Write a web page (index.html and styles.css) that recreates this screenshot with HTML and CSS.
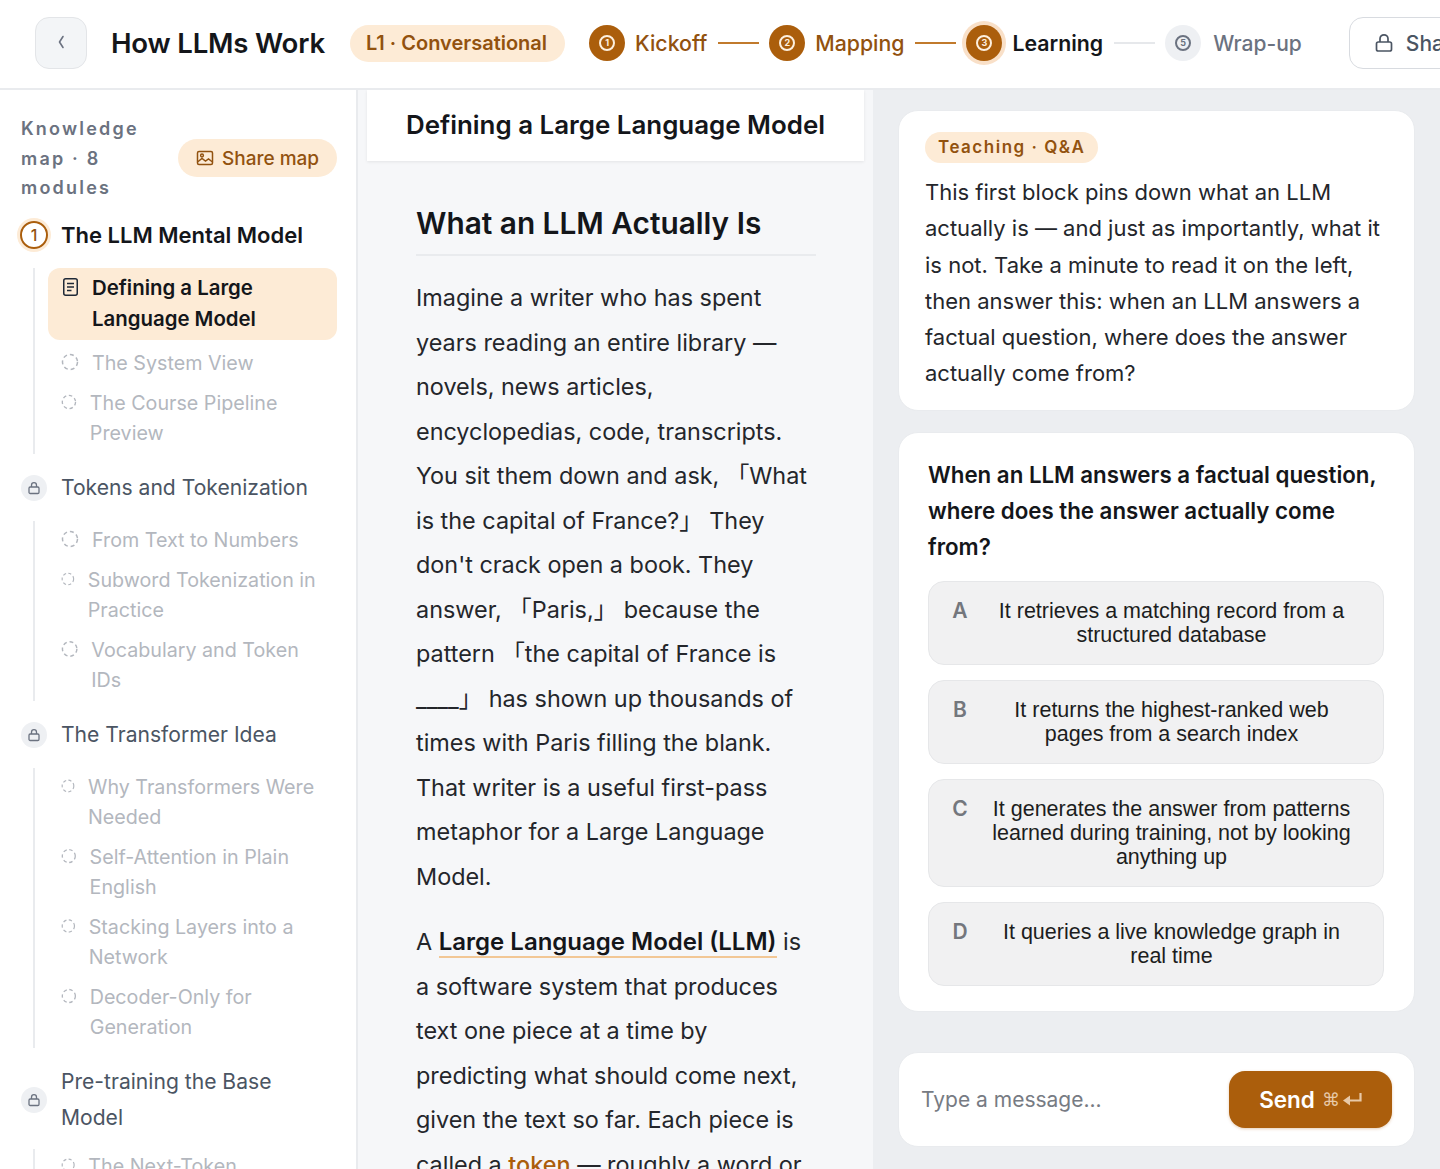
FILE: index.html
```html
<!DOCTYPE html>
<html lang="en">
<head>
  <meta charset="UTF-8">
  <title>How LLMs Work</title>
  <link rel="stylesheet" href="styles.css">
</head>
<body>

  <header class="topbar">
    <button class="back-btn">
      <svg width="12" height="16" viewBox="0 0 12 16"><path d="M8 2.5 L4.5 8 L8 13.5" fill="none" stroke="#6b7280" stroke-width="1.6" stroke-linecap="round" stroke-linejoin="round"/></svg>
    </button>
    <h1 class="course-title">How LLMs Work</h1>
    <span class="level-pill">L1 · Conversational</span>

    <div class="stepper">
      <div class="step done"><span class="step-dot"><i>1</i></span><span class="step-label">Kickoff</span></div>
      <span class="step-line done"></span>
      <div class="step done"><span class="step-dot"><i>2</i></span><span class="step-label">Mapping</span></div>
      <span class="step-line done"></span>
      <div class="step current"><span class="step-dot"><i>3</i></span><span class="step-label">Learning</span></div>
      <span class="step-line"></span>
      <div class="step todo"><span class="step-dot"><i>5</i></span><span class="step-label">Wrap-up</span></div>
    </div>

    <button class="share-btn">
      <svg width="20" height="20" viewBox="0 0 20 20" fill="none" stroke="#4b5563" stroke-width="1.7"><rect x="2.5" y="9" width="15" height="9" rx="1.8"/><path d="M6 9V5.8a4 4 0 0 1 8 0V9"/></svg>
      Share
    </button>
  </header>

  <div class="layout">
    <aside class="sidebar">
      <div class="map-head">
        <div class="map-label">Knowledge map · 8 modules</div>
        <button class="map-share">
          <svg width="18" height="16" viewBox="0 0 18 16" fill="none" stroke="#92520f" stroke-width="1.5"><rect x="1.5" y="1.5" width="15" height="13" rx="1.5"/><circle cx="6" cy="5.5" r="1.4"/><path d="M1.5 12 L6 8.5 L9.5 11 L12.5 9 L16.5 12"/></svg>
          Share map
        </button>
      </div>

      <div class="module active">
        <div class="module-title"><span class="num-dot">1</span><span>The LLM Mental Model</span></div>
        <div class="lessons">
          <div class="lesson current">
            <svg width="15" height="18" viewBox="0 0 15 18" fill="none" stroke="#1f2937" stroke-width="1.5"><rect x="0.75" y="0.75" width="13.5" height="16.5" rx="2"/><path d="M4 5.5h7M4 9h7M4 12.5h4.5"/></svg>
            <span>Defining a Large Language Model</span>
          </div>
          <div class="lesson"><svg class="ring" viewBox="0 0 18 18"><circle cx="9" cy="9" r="7.5"/></svg><span>The System View</span></div>
          <div class="lesson"><svg class="ring" viewBox="0 0 18 18"><circle cx="9" cy="9" r="7.5"/></svg><span>The Course Pipeline Preview</span></div>
        </div>
      </div>

      <div class="module">
        <div class="module-title"><span class="lock-dot"><svg width="14" height="14" viewBox="0 0 14 14" fill="none" stroke="#6b7280" stroke-width="1.3"><rect x="2" y="6" width="10" height="6.5" rx="1.2"/><path d="M4.5 6V4.2a2.5 2.5 0 0 1 5 0V6"/></svg></span><span>Tokens and Tokenization</span></div>
        <div class="lessons">
          <div class="lesson"><svg class="ring" viewBox="0 0 18 18"><circle cx="9" cy="9" r="7.5"/></svg><span>From Text to Numbers</span></div>
          <div class="lesson"><svg class="ring" viewBox="0 0 18 18"><circle cx="9" cy="9" r="7.5"/></svg><span>Subword Tokenization in Practice</span></div>
          <div class="lesson"><svg class="ring" viewBox="0 0 18 18"><circle cx="9" cy="9" r="7.5"/></svg><span>Vocabulary and Token IDs</span></div>
        </div>
      </div>

      <div class="module">
        <div class="module-title"><span class="lock-dot"><svg width="14" height="14" viewBox="0 0 14 14" fill="none" stroke="#6b7280" stroke-width="1.3"><rect x="2" y="6" width="10" height="6.5" rx="1.2"/><path d="M4.5 6V4.2a2.5 2.5 0 0 1 5 0V6"/></svg></span><span>The Transformer Idea</span></div>
        <div class="lessons">
          <div class="lesson"><svg class="ring" viewBox="0 0 18 18"><circle cx="9" cy="9" r="7.5"/></svg><span>Why Transformers Were Needed</span></div>
          <div class="lesson"><svg class="ring" viewBox="0 0 18 18"><circle cx="9" cy="9" r="7.5"/></svg><span>Self-Attention in Plain English</span></div>
          <div class="lesson"><svg class="ring" viewBox="0 0 18 18"><circle cx="9" cy="9" r="7.5"/></svg><span>Stacking Layers into a Network</span></div>
          <div class="lesson"><svg class="ring" viewBox="0 0 18 18"><circle cx="9" cy="9" r="7.5"/></svg><span>Decoder-Only for Generation</span></div>
        </div>
      </div>

      <div class="module">
        <div class="module-title"><span class="lock-dot"><svg width="14" height="14" viewBox="0 0 14 14" fill="none" stroke="#6b7280" stroke-width="1.3"><rect x="2" y="6" width="10" height="6.5" rx="1.2"/><path d="M4.5 6V4.2a2.5 2.5 0 0 1 5 0V6"/></svg></span><span>Pre-training the Base Model</span></div>
        <div class="lessons">
          <div class="lesson"><svg class="ring" viewBox="0 0 18 18"><circle cx="9" cy="9" r="7.5"/></svg><span>The Next-Token Prediction Task</span></div>
        </div>
      </div>
    </aside>

    <main class="reader">
      <div class="reader-title">Defining a Large Language Model</div>
      <article class="article">
        <h2>What an LLM Actually Is</h2>
        <p>Imagine a writer who has spent years reading an entire library — novels, news articles, encyclopedias, code, transcripts. You sit them down and ask, 「What is the capital of France?」 They don't crack open a book. They answer, 「Paris,」 because the pattern 「the capital of France is ____」 has shown up thousands of times with Paris filling the blank. That writer is a useful first-pass metaphor for a Large Language Model.</p>
        <p>A <strong class="term">Large Language Model (LLM)</strong> is a software system that produces text one piece at a time by predicting what should come next, given the text so far. Each piece is called a <strong class="link-term">token</strong> — roughly a word or</p>
      </article>
    </main>

    <section class="chat">
      <div class="card intro">
        <span class="badge">Teaching · Q&amp;A</span>
        <p>This first block pins down what an LLM actually is — and just as importantly, what it is not. Take a minute to read it on the left, then answer this: when an LLM answers a factual question, where does the answer actually come from?</p>
      </div>

      <div class="card quiz">
        <div class="question">When an LLM answers a factual question, where does the answer actually come from?</div>
        <button class="option"><b>A</b><span>It retrieves a matching record from a structured database</span></button>
        <button class="option"><b>B</b><span>It returns the highest-ranked web pages from a search index</span></button>
        <button class="option"><b>C</b><span>It generates the answer from patterns learned during training, not by looking anything up</span></button>
        <button class="option"><b>D</b><span>It queries a live knowledge graph in real time</span></button>
      </div>

      <div class="card composer">
        <input type="text" placeholder="Type a message...">
        <button class="send-btn">Send <span class="cmd">⌘</span>
          <svg width="20" height="15" viewBox="0 0 20 15"><path d="M18.5 1v7.5H7" fill="none" stroke="#e8c9a8" stroke-width="2.2"/><path d="M8 3.5 L1 8.5 L8 13.5 Z" fill="#e8c9a8"/></svg>
        </button>
      </div>
    </section>
  </div>

</body>
</html>
```

FILE: styles.css
```css
* {
  box-sizing: border-box;
}

html, body {
  margin: 0;
  height: 100%;
  overflow: hidden;
}

body {
  font-family: 'Inter', 'Noto Sans CJK SC', sans-serif;
  color: #1a1c20;
  background-color: #fff;
}

button {
  font-family: inherit;
  cursor: pointer;
}

/* top bar */
.topbar {
  height: 90px;
  padding: 0 0 2px 35px;
  display: flex;
  align-items: center;
  border-bottom: 2px solid #e9ebee;
  background-color: #fff;
  overflow: hidden;
}

.back-btn {
  width: 52px;
  height: 52px;
  flex: none;
  padding: 0;
  background-color: #f3f5f7;
  border: 1px solid #e3e5e8;
  border-radius: 14px;
}

.course-title {
  margin: 0 25px 0 24px;
  font-size: 27.6px;
  font-weight: 600;
  letter-spacing: -0.2px;
  white-space: nowrap;
  color: #14161a;
}

.level-pill {
  flex: none;
  padding: 0 18px 0 16px;
  height: 37px;
  line-height: 36px;
  font-size: 20px;
  font-weight: 600;
  color: #92520f;
  background-color: #fdebd6;
  border-radius: 19px;
  white-space: nowrap;
}

.stepper {
  margin-left: 24px;
  display: flex;
  align-items: center;
  flex: none;
}

.step {
  display: flex;
  align-items: center;
  gap: 10px;
}

.step-dot {
  width: 36px;
  height: 36px;
  border-radius: 50%;
  display: flex;
  align-items: center;
  justify-content: center;
  background-color: #ab5e0c;
}

.step-dot i {
  width: 16px;
  height: 16px;
  border: 2px solid #fdf0e0;
  border-radius: 50%;
  font-style: normal;
  font-size: 9px;
  font-weight: 700;
  line-height: 12px;
  text-align: center;
  color: #fdf0e0;
}

.step-label {
  font-size: 21.3px;
  font-weight: 500;
  color: #92520f;
  white-space: nowrap;
}

.step.current .step-dot {
  box-shadow: 0 0 0 4px #f9e0c8;
}

.step.current .step-label {
  font-weight: 600;
  color: #14161a;
}

.step.todo {
  gap: 12px;
}

.step.todo .step-dot {
  background-color: #eef0f3;
}

.step.todo .step-dot i {
  border-color: #6b7280;
  color: #6b7280;
}

.step.todo .step-label {
  font-size: 21px;
  color: #6b7280;
}

.step-line {
  width: 41px;
  height: 2px;
  margin: 0 10px 0 11px;
  background-color: #e6e8eb;
}

.step-line.done {
  background-color: #c17a2c;
}

.share-btn {
  flex: none;
  margin-left: 47px;
  width: 140px;
  height: 52px;
  padding: 0 0 0 24px;
  display: flex;
  align-items: center;
  gap: 12px;
  font-size: 21px;
  font-weight: 500;
  color: #4b5563;
  background-color: #fff;
  border: 1px solid #d8dbe0;
  border-radius: 14px;
}

/* three columns */
.layout {
  height: calc(100vh - 90px);
  display: flex;
  overflow: hidden;
}

.sidebar {
  width: 358px;
  flex: none;
  padding: 24px 19px 0 20px;
  border-right: 2px solid #e9ebee;
  background-color: #fff;
  overflow: hidden;
}

.map-head {
  display: flex;
  align-items: center;
  justify-content: space-between;
  margin-bottom: 14px;
}

.map-label {
  width: 135px;
  padding-left: 1px;
  font-size: 18px;
  font-weight: 600;
  line-height: 29.5px;
  letter-spacing: 2.2px;
  color: #6b7280;
}

.map-share {
  height: 38px;
  width: 159px;
  padding: 0;
  display: flex;
  align-items: center;
  justify-content: center;
  gap: 8px;
  font-size: 19px;
  font-weight: 500;
  color: #92520f;
  background-color: #fdebd6;
  border: 0;
  border-radius: 19px;
  white-space: nowrap;
}

.module-title {
  display: flex;
  align-items: center;
  gap: 13px;
  font-size: 21.1px;
  line-height: 36px;
  color: #4b5563;
}

.module.active .module-title {
  font-size: 22px;
  font-weight: 600;
  color: #14161a;
}

.num-dot {
  width: 28px;
  height: 28px;
  flex: none;
  border: 2px solid #ab5e0c;
  border-radius: 50%;
  box-shadow: 0 0 0 3px #fdebd6;
  font-size: 16px;
  font-weight: 500;
  line-height: 24px;
  text-align: center;
  color: #92520f;
}

.lock-dot {
  width: 26px;
  height: 26px;
  margin-left: 1px;
  margin-right: 1px;
  flex: none;
  display: flex;
  align-items: center;
  justify-content: center;
  border-radius: 50%;
  background-color: #eef0f3;
}

.lessons {
  margin: 15px 0 16px 13px;
  padding: 4px 12px 6px 26px;
  display: flex;
  flex-direction: column;
  gap: 10px;
  border-left: 2px solid #e9ebee;
}

.module.active .lessons {
  padding-top: 0;
  padding-right: 0;
  margin-top: 15px;
}

.module:last-child .lessons {
  margin-top: 13px;
  padding-top: 2px;
}

.lesson {
  display: flex;
  align-items: flex-start;
  gap: 13px;
  font-size: 19.7px;
  line-height: 30px;
  color: #b3b7be;
}

.module.active .lesson:not(.current) {
  padding-right: 12px;
}

.lesson .ring {
  width: 18px;
  height: 18px;
  min-width: 0;
  margin-top: 5px;
  fill: none;
  stroke: #b3b7be;
  stroke-width: 1.5;
  stroke-dasharray: 4 3;
}

.lesson.current {
  padding: 5.5px 12px 5.5px 15px;
  margin-left: -13px;
  margin-bottom: -2px;
  gap: 14px;
  font-size: 20.4px;
  font-weight: 600;
  line-height: 30.5px;
  color: #14161a;
  background-color: #fdebd6;
  border-radius: 12px;
}

.lesson.current svg {
  flex: none;
  margin-top: 5px;
}

/* middle column */
.reader {
  width: 515px;
  flex: none;
  padding: 0 9px;
  background-color: #f6f7f9;
  overflow: hidden;
}

.reader-title {
  height: 71px;
  padding: 19px 0 0 39px;
  font-size: 25.9px;
  font-weight: 600;
  color: #14161a;
  background-color: #fff;
  box-shadow: 0 1px 3px rgba(0, 0, 0, 0.08);
}

.article {
  padding: 42px 48px 0 49px;
}

.article h2 {
  margin: 0 0 20px;
  padding-bottom: 11px;
  font-size: 29.8px;
  font-weight: 600;
  line-height: 40px;
  color: #14161a;
  border-bottom: 2px solid #e9ebee;
}

.article p {
  margin: 0 0 21px;
  font-size: 23.4px;
  line-height: 44.5px;
  color: #24262b;
}

.term {
  font-size: 24px;
  font-weight: 600;
  color: #14161a;
  border-bottom: 2px solid #f2c795;
}

.link-term {
  font-weight: 500;
  color: #ab5e0c;
  border-bottom: 2px solid #f2c795;
}

/* right column */
.chat {
  flex: 1;
  padding: 20px 25px 0 25px;
  display: flex;
  flex-direction: column;
  background-color: #eceef1;
  overflow: hidden;
}

.card {
  flex: none;
  background-color: #fff;
  border: 1px solid #e9ebee;
  border-radius: 20px;
}

.intro {
  height: 301px;
  padding: 21px 25px 0 26px;
  margin-bottom: 21px;
}

.badge {
  display: inline-block;
  height: 31px;
  padding: 0 13px;
  font-size: 17px;
  font-weight: 600;
  line-height: 30px;
  letter-spacing: 1.5px;
  color: #92520f;
  background-color: #fdebd6;
  border-radius: 16px;
}

.intro p {
  margin: 11px 0 0;
  font-size: 22px;
  line-height: 36.3px;
  color: #24262b;
}

.quiz {
  height: 580px;
  padding: 24px 30px 0 29px;
  margin-bottom: 40px;
}

.question {
  margin-bottom: 16px;
  font-size: 22.3px;
  font-weight: 600;
  line-height: 36px;
  color: #14161a;
}

.option {
  width: 100%;
  margin-bottom: 15px;
  padding: 17px 24px 17px 23px;
  display: flex;
  gap: 16px;
  text-align: center;
  background-color: #f1f1f2;
  border: 1px solid #e6e7e9;
  border-radius: 16px;
}

.option b {
  flex: none;
  width: 16px;
  font-family: 'Inter', sans-serif;
  font-size: 21px;
  font-weight: 600;
  line-height: 24px;
  color: #74777d;
}

.option span {
  flex: 1;
  font-family: 'Liberation Sans', Arial, sans-serif;
  font-size: 21.5px;
  line-height: 24px;
  color: #1c1d20;
}

.composer {
  height: 95px;
  padding: 0 22px 0 22px;
  display: flex;
  align-items: center;
  justify-content: space-between;
}

.composer input {
  flex: 1;
  min-width: 0;
  padding: 0;
  border: 0;
  outline: 0;
  font-family: inherit;
  font-size: 21px;
  color: #1c1d20;
}

.composer input::placeholder {
  color: #777b83;
}

.send-btn {
  width: 163px;
  height: 57px;
  flex: none;
  padding: 0;
  display: flex;
  align-items: center;
  justify-content: center;
  gap: 2px;
  font-size: 22.5px;
  font-weight: 600;
  color: #fff;
  background-color: #ab5e0c;
  border: 0;
  border-radius: 16px;
  box-shadow: 0 1px 3px rgba(171, 94, 12, 0.3);
}

.cmd {
  margin-left: 5px;
  font-family: 'DejaVu Sans', sans-serif;
  font-size: 18px;
  font-weight: 400;
  color: #e8c9a8;
}
```
